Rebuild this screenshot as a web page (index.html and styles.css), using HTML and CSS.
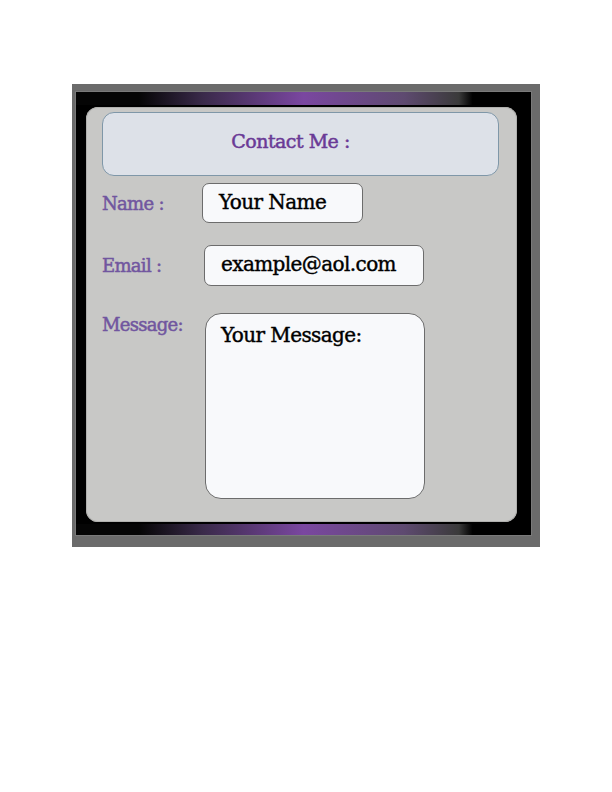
FILE: index.html
```html
<!DOCTYPE html>
<html>
<head>
<meta charset="utf-8">
<link rel="stylesheet" href="styles.css">
</head>
<body>
<div class="frame">
  <div class="bezel">
    <div class="panel">
      <div class="header">Contact Me :</div>
      <div class="row row-name">
        <span class="label">Name :</span>
        <div class="field field-name">Your Name</div>
      </div>
      <div class="row row-email">
        <span class="label">Email :</span>
        <div class="field field-email">example@aol.com</div>
      </div>
      <div class="row row-message">
        <span class="label">Message:</span>
        <div class="field field-message">Your Message:</div>
      </div>
    </div>
  </div>
</div>
</body>
</html>
```

FILE: styles.css
```css
html, body {
  margin: 0;
  padding: 0;
  background: #ffffff;
}

body {
  font-family: "DejaVu Serif", serif;
}

.frame {
  margin: 84px 0 0 72px;
  width: 457px;
  height: 445px;
  padding: 7px 8px 11px 3px;
  background: #6b6b6b;
}

.bezel {
  box-sizing: border-box;
  width: 457px;
  height: 445px;
  padding: 16px 15px 14px 11px;
  background:
    linear-gradient(90deg, #050505 0%, #050505 14%, #3a2a4a 28%, #7a47a0 50%, #5e4a70 72%, #3a3a3a 84%, #000 87%, #000 100%) top / 100% 14px no-repeat,
    linear-gradient(90deg, #050505 0%, #050505 14%, #3a2a4a 28%, #7a47a0 50%, #5e4a70 72%, #3a3a3a 84%, #000 87%, #000 100%) bottom / 100% 12px no-repeat,
    #000;
  background-origin: border-box;
  box-shadow: inset 0 0 0 1px #7a7a7a;
}

.panel {
  box-sizing: border-box;
  height: 415px;
  padding: 5px 18px 0 16px;
  background: #c8c8c6;
  border-radius: 12px;
  box-shadow: inset 0 0 0 1px #b0b0ae;
}

.header {
  box-sizing: border-box;
  height: 64px;
  display: flex;
  align-items: center;
  justify-content: center;
  background: #dde1e8;
  border: 1px solid #7f97a8;
  border-radius: 12px;
  color: #6a3a96;
  font-size: 19px;
  letter-spacing: -0.5px;
  padding: 0 20px 7px 0;
  -webkit-text-stroke: 0.5px currentColor;
}

.row {
  display: flex;
  align-items: center;
}

.label {
  width: 100px;
  color: #71569f;
  font-size: 18px;
  letter-spacing: -0.7px;
  -webkit-text-stroke: 0.5px currentColor;
}

.field {
  box-sizing: border-box;
  background: #f8f9fb;
  border: 1px solid #6c6c6c;
  color: #000;
  font-size: 20px;
  letter-spacing: -0.6px;
  -webkit-text-stroke: 0.4px currentColor;
}

.row-name {
  margin-top: 7px;
}

.field-name {
  width: 161px;
  height: 40px;
  border-radius: 7px;
  padding: 6px 0 0 16px;
}

.row-email {
  margin-top: 22px;
}

.row-email .label {
  width: 102px;
}

.field-email {
  width: 220px;
  height: 41px;
  border-radius: 7px;
  padding: 6px 0 0 16px;
}

.row-message {
  margin-top: 27px;
  align-items: flex-start;
}

.row-message .label {
  width: 103px;
  padding-top: 1px;
}

.field-message {
  width: 220px;
  height: 186px;
  border-radius: 16px;
  padding: 9px 0 0 15px;
}
```
